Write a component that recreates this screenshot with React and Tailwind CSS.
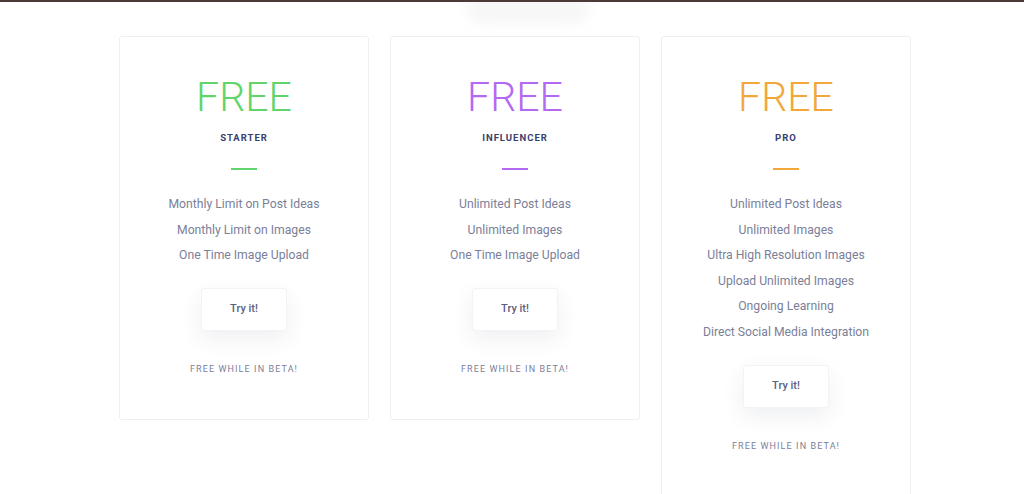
const plans = [
  {
    name: "STARTER",
    color: "text-[#62d46b]",
    bar: "bg-[#62d46b]",
    features: ["Monthly Limit on Post Ideas", "Monthly Limit on Images", "One Time Image Upload"],
  },
  {
    name: "INFLUENCER",
    color: "text-[#b369f2]",
    bar: "bg-[#b369f2]",
    features: ["Unlimited Post Ideas", "Unlimited Images", "One Time Image Upload"],
  },
  {
    name: "PRO",
    color: "text-[#f3a73a]",
    bar: "bg-[#f3a73a]",
    features: [
      "Unlimited Post Ideas",
      "Unlimited Images",
      "Ultra High Resolution Images",
      "Upload Unlimited Images",
      "Ongoing Learning",
      "Direct Social Media Integration",
    ],
  },
];

const PlanCard = ({ plan }) => (
  <div className="w-[250px] bg-white border border-[#efeff1] rounded-[3px] flex flex-col items-center pt-[37px] pb-[43px]">
    <h2 className={`${plan.color} text-[41px] leading-[46px] font-light`}>FREE</h2>
    <h3 className="mt-[11px] text-[9.5px] leading-[14px] font-bold tracking-[1px] text-[#383f6e]">{plan.name}</h3>
    <div className={`${plan.bar} mt-[23px] w-[26px] h-[2px]`}></div>
    <ul className="mt-[22px] text-center text-[12.2px] leading-[25.6px] text-[#7b8099]">
      {plan.features.map((f, i) => (
        <li key={i}>{f}</li>
      ))}
    </ul>
    <button className="mt-[19px] w-[86px] h-[43px] bg-white rounded-[3px] border border-[#f3f3f5] shadow-[0_8px_22px_rgba(40,45,80,0.08)] text-[11px] font-medium text-[#5b6080]">
      Try it!
    </button>
    <p className="mt-[31px] text-[9px] leading-[14px] tracking-[1.1px] text-[#7b8099]">FREE WHILE IN BETA!</p>
  </div>
);

export default function App() {
  return (
    <div className="relative w-full h-[494px] overflow-hidden bg-white font-['Roboto',sans-serif]">
      <div className="relative z-10 h-[2px] bg-[#4b3a36]"></div>
      <div className="absolute left-[466px] top-[-6px] w-[124px] h-[30px] rounded-full bg-[#f7f7f7] blur-[6px]"></div>
      <div className="relative ml-[119px] mt-[34px] flex items-start gap-[21px]">
        {plans.map((p) => (
          <PlanCard key={p.name} plan={p} />
        ))}
      </div>
    </div>
  );
}
